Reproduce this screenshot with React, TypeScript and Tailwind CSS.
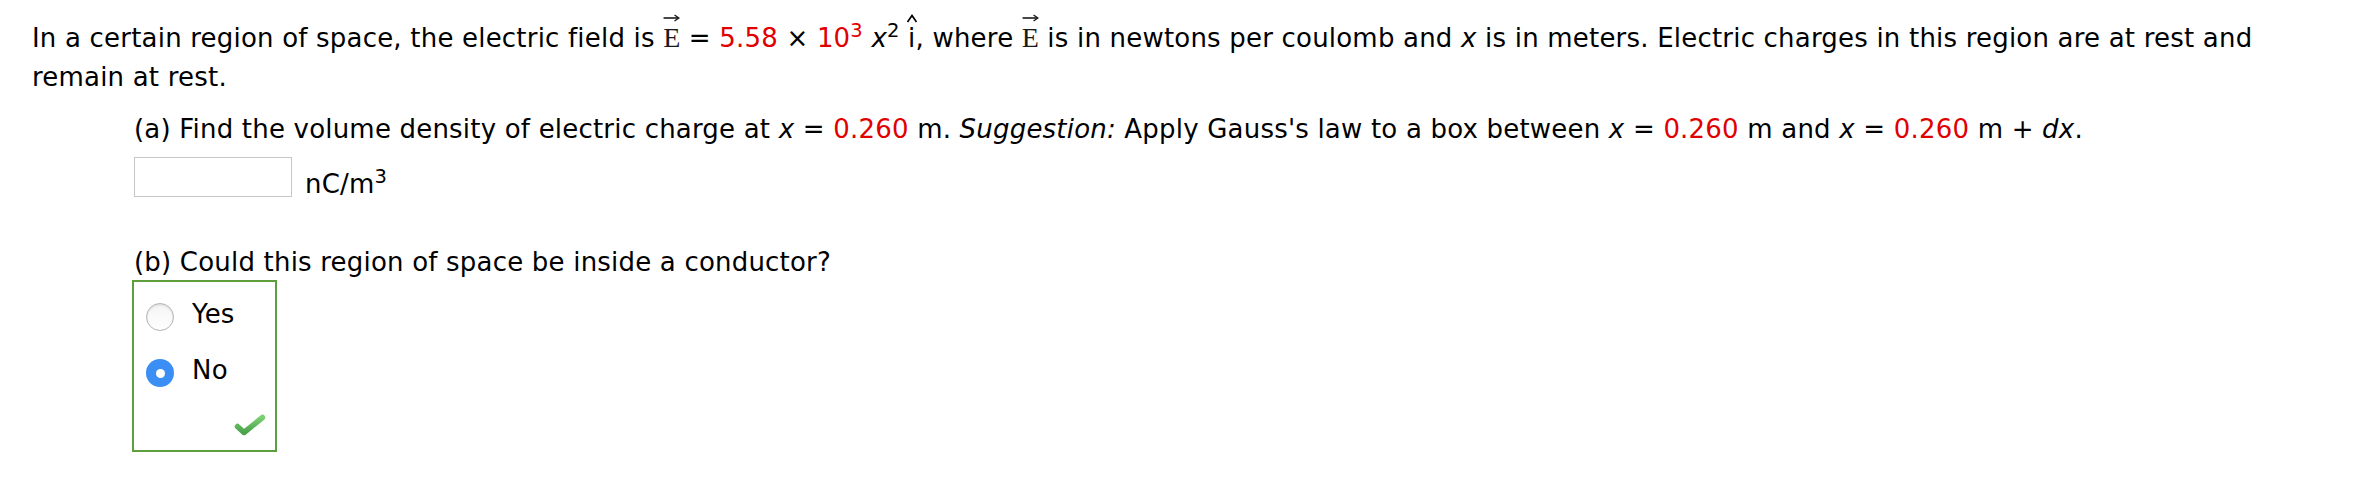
import React from "react";

function VecE() {
  return (
    <span className="relative inline-block font-['Liberation_Serif',serif] text-[28px] text-[#1a1a1a] tracking-normal">
      E
      <svg className="absolute left-0 -top-[4px] w-full h-[8px]" viewBox="0 0 17 8">
        <path d="M0.5 4H15" stroke="#1a1a1a" strokeWidth="1.6" />
        <path d="M11.5 1L15.8 4L11.5 7" fill="none" stroke="#1a1a1a" strokeWidth="1.4" />
      </svg>
    </span>
  );
}

function HatI() {
  return (
    <span className="relative inline-block">
      i
      <svg className="absolute left-1/2 -translate-x-1/2 -top-[5px] w-[11px] h-[9px]" viewBox="0 0 11 9">
        <path d="M1 8L5.5 1.5L10 8" fill="none" stroke="#000" strokeWidth="1.7" />
      </svg>
    </span>
  );
}

const Red = ({ children }: { children: React.ReactNode }) => <span className="text-[#e00000]">{children}</span>;

function Radio({ checked }: { checked?: boolean }) {
  if (checked) {
    return (
      <span className="w-[28px] h-[28px] rounded-full bg-[#3b8ef3] flex items-center justify-center shrink-0">
        <span className="w-[9px] h-[9px] rounded-full bg-white" />
      </span>
    );
  }
  return <span className="w-[28px] h-[28px] rounded-full border border-[#b4b4b4] bg-gradient-to-b from-[#f4f4f4] to-white shadow-[inset_0_1px_2px_rgba(0,0,0,0.12)] shrink-0" />;
}

export default function App() {
  return (
    <div className="w-[2372px] h-[484px] bg-white text-black font-['DejaVu_Sans',Verdana,sans-serif] text-[26px] leading-[39px] tracking-[0.2px] pl-[32px] pt-[18px]">
      <p className="w-[2250px]">
        In a certain region of space, the electric field is <VecE /> = <Red>5.58</Red> × <Red>10<sup>3</sup></Red>{" "}
        <i>x</i>
        <sup>2</sup> <HatI />, where <VecE /> is in newtons per coulomb and <i>x</i> is in meters. Electric charges in this region are at rest and
        remain at rest.
      </p>

      <div className="ml-[102px] mt-[13px]">
        <p>
          (a) Find the volume density of electric charge at <i>x</i> = <Red>0.260</Red> m. <i>Suggestion:</i> Apply Gauss's law to a box between{" "}
          <i>x</i> = <Red>0.260</Red> m and <i>x</i> = <Red>0.260</Red> m + <i>dx</i>.
        </p>
        <div className="flex mt-[8px]">
          <input type="text" className="w-[158px] h-[40px] border border-[#c6c6c6] bg-white outline-none" />
          <span className="ml-[13px] mt-[8px]">
            nC/m<sup>3</sup>
          </span>
        </div>

        <p className="mt-[39px]">(b) Could this region of space be inside a conductor?</p>
        <div className="-ml-[2px] -mt-[2px] w-[145px] h-[172px] border-2 border-[#5c9f3c] pl-[12px] pt-[7px]">
          <div className="flex items-center h-[56px]">
            <Radio />
            <span className="ml-[18px] mb-[6px]">Yes</span>
          </div>
          <div className="flex items-center h-[56px]">
            <Radio checked />
            <span className="ml-[18px] mb-[6px]">No</span>
          </div>
          <div className="flex justify-end pr-[9px] mt-[13px]">
            <svg width="32" height="22" viewBox="0 0 32 22">
              <defs>
                <linearGradient id="chk" x1="0" y1="0" x2="0" y2="1">
                  <stop offset="0" stopColor="#7ccf72" />
                  <stop offset="1" stopColor="#4aa24a" />
                </linearGradient>
              </defs>
              <path d="M3.5 12.5L10 18.5L28.5 3.5" fill="none" stroke="url(#chk)" strokeWidth="5.5" strokeLinecap="round" strokeLinejoin="round" />
            </svg>
          </div>
        </div>
      </div>
    </div>
  );
}
